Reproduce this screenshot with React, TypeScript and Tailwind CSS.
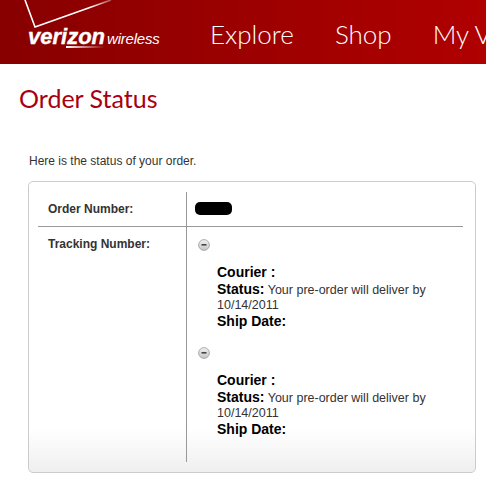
import React from "react";

const Minus = () => (
  <svg width="12" height="12" viewBox="0 0 12 12" className="block">
    <defs>
      <linearGradient id="m" x1="0" y1="0" x2="0" y2="1">
        <stop offset="0" stopColor="#f2f2f2" />
        <stop offset="1" stopColor="#c4c4c4" />
      </linearGradient>
    </defs>
    <circle cx="6" cy="6" r="5.4" fill="url(#m)" stroke="#9a9a9a" strokeWidth="0.8" />
    <rect x="3.5" y="5" width="5" height="1.6" fill="#444" />
  </svg>
);

const Shipment = () => (
  <div>
    <Minus />
    <div className="ml-[19px] mt-[13px] w-[232px] text-[12.5px] leading-[15px] text-[#333]">
      <div className="mb-px text-[14px] leading-[17px] font-bold text-black">Courier :</div>
      <div>
        <span className="text-[14px] leading-[15px] font-bold text-black">Status:</span> Your pre-order will deliver by 10/14/2011
      </div>
      <div className="text-[14px] leading-[17px] font-bold text-black">Ship Date:</div>
    </div>
  </div>
);

export default function App() {
  return (
    <div className="w-[486px] h-[480px] overflow-hidden bg-white font-['Liberation_Sans',Arial,sans-serif]">
      <header className="h-[64px] flex bg-gradient-to-r from-[#880000] to-[#b00000] overflow-hidden">
        <div className="relative w-[210px] shrink-0">
          <svg width="120" height="32" viewBox="0 0 120 32" className="absolute left-0 top-0">
            <defs>
              <linearGradient id="c" x1="0" y1="0" x2="1" y2="0">
                <stop offset="0.75" stopColor="#fff" />
                <stop offset="1" stopColor="#fff" stopOpacity="0.3" />
              </linearGradient>
            </defs>
            <path d="M25 0 L35 27 L111 0" fill="none" stroke="url(#c)" strokeWidth="1.6" />
          </svg>
          <div className="absolute left-[28px] top-[26px] flex items-baseline whitespace-nowrap text-white">
            <span className="text-[22px] leading-[22px] font-bold italic [-webkit-text-stroke:0.4px_white]">verizon</span>
            <span className="text-[15px] leading-[22px] italic tracking-[-0.2px] ml-[2px]">wireless</span>
          </div>
          <div className="absolute left-[66px] top-[46px] h-[2px] w-[39px] bg-gradient-to-r from-white to-transparent" />
        </div>
        <nav className="flex gap-[41px] pt-[17px] text-[26px] leading-[34px] font-light text-white whitespace-nowrap font-['Lato',sans-serif]">
          <span>Explore</span>
          <span>Shop</span>
          <span>My Verizon</span>
        </nav>
      </header>

      <main className="px-[28px]">
        <h1 className="ml-[-9px] mt-[18px] text-[25px] leading-[32px] font-normal text-[#a80010] font-['Lato',sans-serif]">
          Order Status
        </h1>
        <p className="ml-[1px] mt-[40px] text-[12px] leading-[15px] text-[#333]">Here is the status of your order.</p>

        <section className="mt-[12px] w-[448px] h-[292px] rounded-[5px] border border-[#cccccc] bg-gradient-to-b from-white from-[85%] to-[#efefef] px-[9px] py-[10px]">
          <div className="w-[425px] h-full grid grid-cols-[149px_1fr] grid-rows-[35px_1fr] text-[12px] font-bold text-[#333]">
            <div className="pl-[10px] pt-[10px] border-r border-b border-[#999] leading-[15px]">Order Number:</div>
            <div className="pl-[8px] pt-[10px] border-b border-[#999]">
              <div className="w-[37px] h-[13px] rounded-[5px] bg-black" />
            </div>
            <div className="pl-[10px] pt-[10px] border-r border-[#999] leading-[15px]">Tracking Number:</div>
            <div className="pl-[11px] pt-[12px] font-normal flex flex-col gap-[17px]">
              <Shipment />
              <Shipment />
            </div>
          </div>
        </section>
      </main>
    </div>
  );
}
